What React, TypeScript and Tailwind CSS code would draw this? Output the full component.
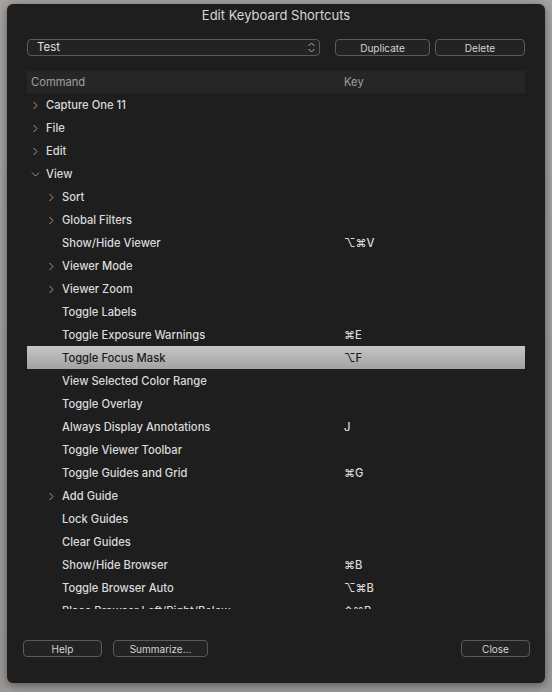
import React from 'react';

type Row = {
  label: string;
  level: number;
  chevron?: 'right' | 'down';
  shortcut?: string;
  selected?: boolean;
};

const rows: Row[] = [
  { label: 'Capture One 11', level: 0, chevron: 'right' },
  { label: 'File', level: 0, chevron: 'right' },
  { label: 'Edit', level: 0, chevron: 'right' },
  { label: 'View', level: 0, chevron: 'down' },
  { label: 'Sort', level: 1, chevron: 'right' },
  { label: 'Global Filters', level: 1, chevron: 'right' },
  { label: 'Show/Hide Viewer', level: 1, shortcut: '⌥⌘V' },
  { label: 'Viewer Mode', level: 1, chevron: 'right' },
  { label: 'Viewer Zoom', level: 1, chevron: 'right' },
  { label: 'Toggle Labels', level: 1 },
  { label: 'Toggle Exposure Warnings', level: 1, shortcut: '⌘E' },
  { label: 'Toggle Focus Mask', level: 1, shortcut: '⌥F', selected: true },
  { label: 'View Selected Color Range', level: 1 },
  { label: 'Toggle Overlay', level: 1 },
  { label: 'Always Display Annotations', level: 1, shortcut: 'J' },
  { label: 'Toggle Viewer Toolbar', level: 1 },
  { label: 'Toggle Guides and Grid', level: 1, shortcut: '⌘G' },
  { label: 'Add Guide', level: 1, chevron: 'right' },
  { label: 'Lock Guides', level: 1 },
  { label: 'Clear Guides', level: 1 },
  { label: 'Show/Hide Browser', level: 1, shortcut: '⌘B' },
  { label: 'Toggle Browser Auto', level: 1, shortcut: '⌥⌘B' },
  { label: 'Place Browser Left/Right/Below', level: 1, shortcut: '⌃⌘B' },
];

const Chevron = ({ dir }: { dir: 'right' | 'down' }) => (
  <svg width="9" height="9" viewBox="0 0 9 9" className="text-[#a8a8a8]">
    {dir === 'right' ? (
      <polyline points="2.5,1 6,4.5 2.5,8" fill="none" stroke="currentColor" strokeWidth="0.9" />
    ) : (
      <polyline points="1,2.5 4.5,6 8,2.5" fill="none" stroke="currentColor" strokeWidth="0.9" />
    )}
  </svg>
);

const Button = ({ label, width }: { label: string; width: string }) => (
  <button
    className={`${width} h-[17px] rounded-[4px] border border-[#5a5a5a] bg-[#232323] text-[10px] leading-none text-[#d6d6d6] flex items-center justify-center`}
  >
    {label}
  </button>
);

const CommandRow = ({ row }: { row: Row }) => {
  const indent = row.level === 0 ? 'pl-[19px]' : 'pl-[35px]';
  return (
    <div
      className={`relative h-[23px] pt-[1px] flex items-center shrink-0 ${
        row.selected
          ? 'bg-gradient-to-b from-[#c6c6c6] to-[#a2a2a2] text-[#1c1c1c]'
          : 'text-[#dadada]'
      }`}
    >
      <div className={`w-[317px] flex items-center ${indent} relative`}>
        {row.chevron && (
          <span className={`absolute top-[4px] ${row.level === 0 ? 'left-[4px]' : 'left-[20px]'}`}>
            <Chevron dir={row.chevron} />
          </span>
        )}
        <span className="font-medium">{row.label}</span>
      </div>
      {row.shortcut && <span className="font-medium">{row.shortcut}</span>}
    </div>
  );
};

export default function App() {
  return (
    <div
      className="w-[552px] h-[692px] bg-gradient-to-b from-[#a7a3a1] to-[#9c9896] pt-[4px] pl-[7px] overflow-hidden"
      style={{ fontFamily: 'Inter, "Noto Sans", sans-serif' }}
    >
      <div className="w-[538px] h-[679px] rounded-[6px] bg-[#1e1e1e] shadow-[0_2px_10px_rgba(0,0,0,0.45)] flex flex-col">
        {/* Title */}
        <div className="h-[24px] flex items-center justify-center text-[13px] text-[#d8d8d8]">
          Edit Keyboard Shortcuts
        </div>

        {/* Shortcut set controls */}
        <div className="mt-[11px] px-[20px] flex items-center">
          <div className="w-[293px] h-[17px] rounded-[4px] border border-[#5a5a5a] bg-[#232323] flex items-center justify-between pl-[9px] pr-[4px]">
            <span className="text-[11.5px] leading-none text-[#e0e0e0]">Test</span>
            <svg width="7" height="11" viewBox="0 0 7 11" className="text-[#b0b0b0]">
              <polyline points="0.5,4 3.5,1 6.5,4" fill="none" stroke="currentColor" strokeWidth="1" />
              <polyline points="0.5,7 3.5,10 6.5,7" fill="none" stroke="currentColor" strokeWidth="1" />
            </svg>
          </div>
          <div className="ml-[15px] flex gap-[5px]">
            <Button label="Duplicate" width="w-[95px]" />
            <Button label="Delete" width="w-[90px]" />
          </div>
        </div>

        {/* Table */}
        <div className="mt-[15px] mx-[20px] flex flex-col text-[11.2px]">
          <div className="h-[22px] bg-[#262626] flex items-center text-[#a0a0a0]">
            <span className="w-[317px] pl-[4px]">Command</span>
            <span>Key</span>
          </div>
          <div className="h-[516px] overflow-hidden flex flex-col">
            {rows.map((row) => (
              <CommandRow key={row.label} row={row} />
            ))}
          </div>
        </div>

        {/* Footer */}
        <div className="mt-[31px] pl-[16px] pr-[15px] flex items-center">
          <Button label="Help" width="w-[79px]" />
          <div className="ml-[11px]">
            <Button label="Summarize..." width="w-[95px]" />
          </div>
          <div className="ml-auto">
            <Button label="Close" width="w-[69px]" />
          </div>
        </div>
      </div>
    </div>
  );
}
